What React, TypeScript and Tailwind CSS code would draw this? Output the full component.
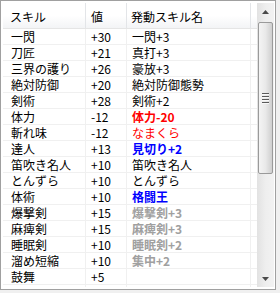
import React from "react";

type Row = {
  skill: string;
  value: string;
  effect: string;
  tone?: "red" | "redBold" | "blue" | "gray";
};

const rows: Row[] = [
  { skill: "一閃", value: "+30", effect: "一閃+3" },
  { skill: "刀匠", value: "+21", effect: "真打+3" },
  { skill: "三界の護り", value: "+26", effect: "豪放+3" },
  { skill: "絶対防御", value: "+20", effect: "絶対防御態勢" },
  { skill: "剣術", value: "+28", effect: "剣術+2" },
  { skill: "体力", value: "-12", effect: "体力-20", tone: "redBold" },
  { skill: "斬れ味", value: "-12", effect: "なまくら", tone: "red" },
  { skill: "達人", value: "+13", effect: "見切り+2", tone: "blue" },
  { skill: "笛吹き名人", value: "+10", effect: "笛吹き名人" },
  { skill: "とんずら", value: "+10", effect: "とんずら" },
  { skill: "体術", value: "+10", effect: "格闘王", tone: "blue" },
  { skill: "爆撃剣", value: "+15", effect: "爆撃剣+3", tone: "gray" },
  { skill: "麻痺剣", value: "+15", effect: "麻痺剣+3", tone: "gray" },
  { skill: "睡眠剣", value: "+10", effect: "睡眠剣+2", tone: "gray" },
  { skill: "溜め短縮", value: "+10", effect: "集中+2", tone: "gray" },
  { skill: "鼓舞", value: "+5", effect: "" },
];

const toneClass: Record<string, string> = {
  red: "text-[#ff0000]",
  redBold: "text-[#ff0000] font-bold",
  blue: "text-[#0000ff] font-bold",
  gray: "text-[#a0a0a0] font-bold",
};

const font = "font-['Noto_Sans_CJK_JP','Noto_Sans',sans-serif]";

function Arrow({ up }: { up?: boolean }) {
  return (
    <svg width="7" height="4" viewBox="0 0 7 4" className="block">
      {up ? (
        <polygon points="3.5,0 7,4 0,4" fill="#4a4a4a" />
      ) : (
        <polygon points="0,0 7,0 3.5,4" fill="#4a4a4a" />
      )}
    </svg>
  );
}

function ScrollBar() {
  return (
    <div className="w-[17px] h-full flex flex-col bg-gradient-to-r from-[#e2e2e2] via-[#eeeeee] to-[#f2f2f2]">
      <div className="h-[17px] flex items-center justify-center">
        <Arrow up />
      </div>
      <div className="flex-1 pt-[2px] flex flex-col">
        <div className="h-[152px] mx-[1px] rounded-[2px] border border-[#9a9a9a] bg-gradient-to-r from-[#f4f4f4] via-[#e9e9e9] to-[#cfcfcf] flex flex-col items-center justify-center gap-[1px]">
          {[0, 1, 2, 3].map((i) => (
            <div key={i} className="w-[7px] h-[2px] border-t border-[#5a5a5a] border-b border-b-[#f8f8f8]" />
          ))}
        </div>
      </div>
      <div className="h-[17px] flex items-center justify-center">
        <Arrow />
      </div>
    </div>
  );
}

export default function App() {
  return (
    <div className={`w-[280px] h-[293px] bg-[#f0f0f0] ${font} text-[12px] leading-[15px] text-black`}>
      <div className="w-[276px] h-[290px] border border-[#a0a0a0] bg-white pt-[2px] pl-[2px] pr-[1px] pb-[2px] flex">
        <div className="w-[254px] h-full flex flex-col overflow-hidden">
          {/* column headers */}
          <div className="h-[26px] shrink-0 flex border-b border-[#e5e5e5] bg-gradient-to-b from-white via-white to-[#f3f4f6]">
            <div className="w-[83px] border-r border-[#e3e5e8] pl-[7px] pt-[1px] flex items-center">スキル</div>
            <div className="w-[41px] border-r border-[#e3e5e8] pl-[5px] pt-[1px] flex items-center">値</div>
            <div className="w-[124px] border-r border-[#e3e5e8] pl-[4px] pt-[1px] flex items-center">発動スキル名</div>
            <div className="flex-1" />
          </div>
          {rows.map((r) => (
            <div key={r.skill} className="h-[16px] shrink-0 flex border-b border-[#f0f0f0]">
              <div className="w-[83px] border-r border-[#f0f0f0] pl-[8px] whitespace-nowrap overflow-hidden">{r.skill}</div>
              <div className="w-[41px] border-r border-[#f0f0f0] pl-[5px] whitespace-nowrap">{r.value}</div>
              <div className={`w-[124px] border-r border-[#f0f0f0] pl-[5px] whitespace-nowrap overflow-hidden ${r.tone ? toneClass[r.tone] : ""}`}>
                {r.effect}
              </div>
              <div className="flex-1" />
            </div>
          ))}
          <div className="flex-1 flex">
            <div className="w-[83px] border-r border-[#f0f0f0]" />
            <div className="w-[41px] border-r border-[#f0f0f0]" />
            <div className="w-[124px] border-r border-[#f0f0f0]" />
          </div>
        </div>
        <ScrollBar />
      </div>
    </div>
  );
}
